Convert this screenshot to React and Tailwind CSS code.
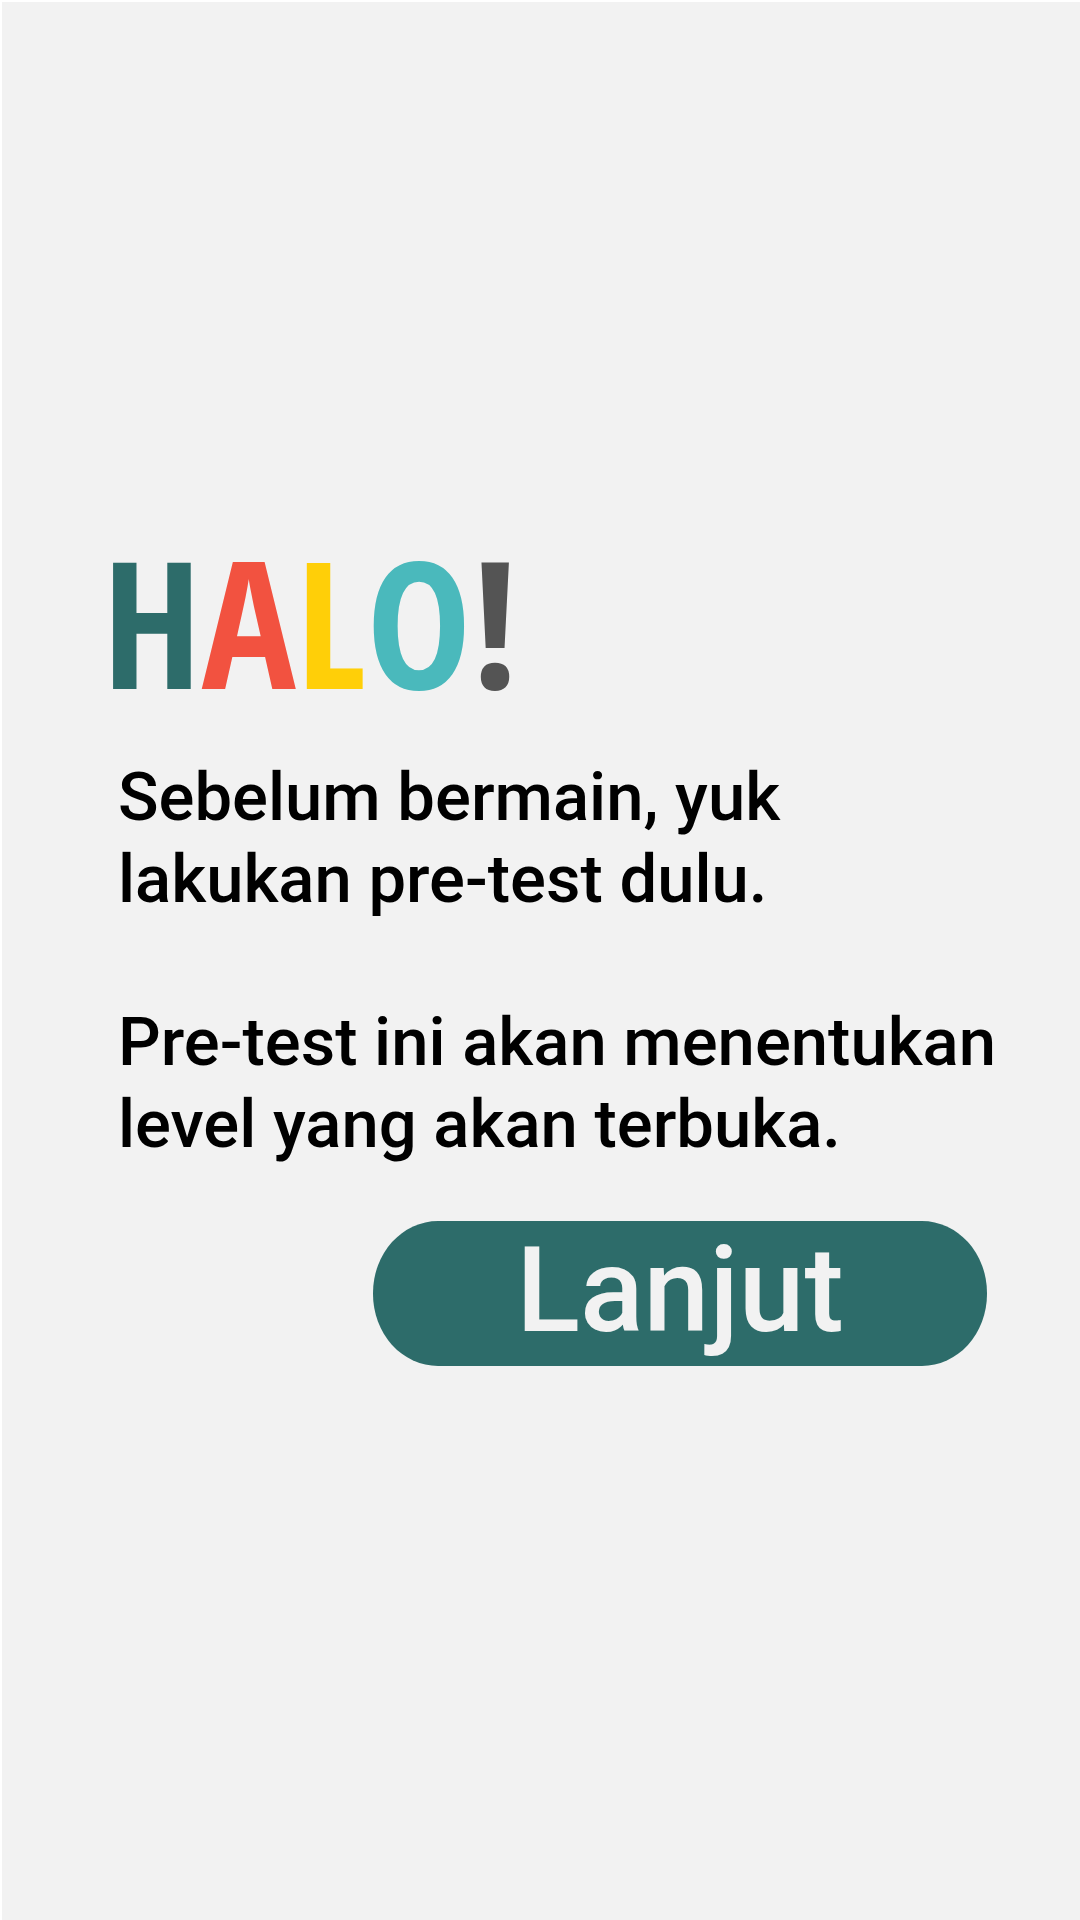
const letters = [
  { char: "H", color: "text-[#2d6c6a]" },
  { char: "A", color: "text-[#f25240]" },
  { char: "L", color: "text-[#ffcf08]" },
  { char: "O", color: "text-[#4ab9bc]" },
  { char: "!", color: "text-[#545454]" },
];

function Greeting() {
  return (
    <h1
      aria-label="HALO!"
      className="font-['Open_Sans_Condensed','Roboto_Condensed',sans-serif] text-[176px] leading-[130px] font-bold"
    >
      {letters.map(({ char, color }) => (
        <span key={char} className={color}>
          {char}
        </span>
      ))}
    </h1>
  );
}

export default function App() {
  return (
    <main className="flex min-h-screen flex-col justify-center border-t-2 border-l-2 border-white bg-[#f2f2f2] pr-12 pl-[100px] font-[Roboto,sans-serif]">
      <Greeting />

      <div className="mt-[70px] space-y-[81px] pl-4 text-[67px] leading-[82px] font-medium text-black">
        <p>
          Sebelum bermain, yuk
          <br />
          lakukan pre-test dulu.
        </p>
        <p>
          Pre-test ini akan menentukan
          <br />
          level yang akan terbuka.
        </p>
      </div>

      <button
        type="button"
        className="mt-14 mr-[45px] w-[614px] max-w-full cursor-pointer self-end rounded-[65px/72px] bg-[#2d6c6a] pb-1 text-center text-[118px] leading-[141px] font-medium text-[#f2f2f2]"
      >
        Lanjut
      </button>
    </main>
  );
}
